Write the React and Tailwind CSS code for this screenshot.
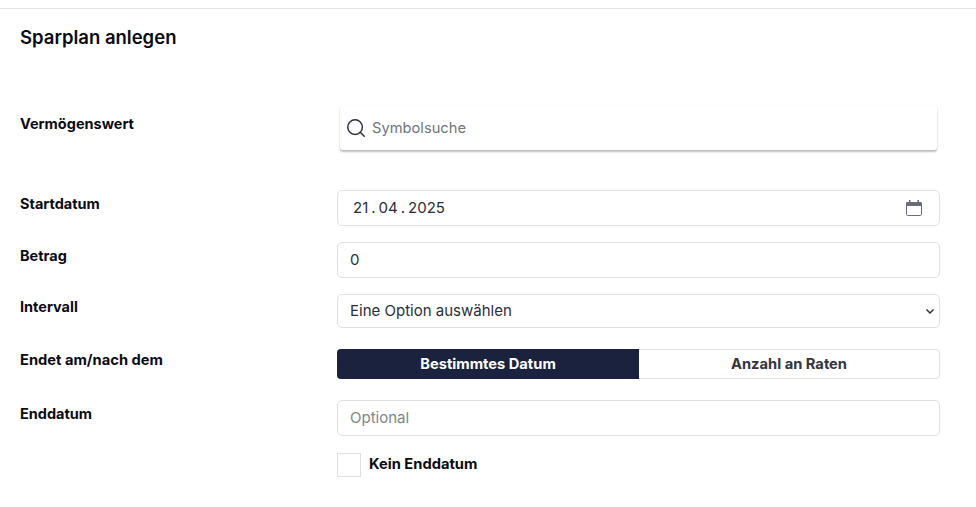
import React from 'react';
import { Search } from 'lucide-react';

const labelClass = 'text-[14.500px] leading-[20px] font-bold text-[#0b0b14]';
const fieldClass = 'w-full rounded-[5px] border border-[#e1e1e1] bg-white px-3 text-[15px] text-[#2b2d3a] outline-none';

function CalendarIcon() {
  return (
    <svg width="16" height="16" viewBox="0 0 16 16" fill="none">
      <path d="M3 0h1.500v2h7V0H13v2h1.500c.8 0 1.500.7 1.500 1.500V6H0V3.500C0 2.700.7 2 1.500 2H3z" fill="#6b6c7a" />
      <rect x="0.500" y="2.500" width="15" height="13" rx="1.200" stroke="#6b6c7a" />
    </svg>
  );
}

export default function App() {
  return (
    <div className="min-h-[507px] bg-white font-['Inter',sans-serif]">
      <div className="pt-2">
        <div className="border-t border-[#e3e3e3]" />
      </div>

      <h1 className="ml-5 mt-4 text-[18.500px] leading-[24px] font-semibold text-[#0b0b14]">Sparplan anlegen</h1>

      <div className="mt-[57px] grid grid-cols-[337px_603px] items-start">
        <div className={`pl-5 pt-2 ${labelClass}`}>Vermögenswert</div>
        <div className="px-[3px] h-[44px]">
          <div className="flex h-[44px] items-center gap-[5px] rounded-[3px] bg-white pl-[5px] shadow-[0_2px_2px_rgba(0,0,0,0.25),0_0_2px_rgba(0,0,0,0.06)]">
            <Search size={22} strokeWidth={1.600} className="text-[#2b2d3a]" />
            <input placeholder="Symbolsuche" className="flex-1 bg-transparent text-[14.700px] text-[#2b2d3a] outline-none placeholder:text-[#71757d]" />
          </div>
        </div>

        <div className={`mt-[40px] pl-5 pt-1 ${labelClass}`}>Startdatum</div>
        <div className="mt-[40px]">
          <div className={`${fieldClass} flex h-[36px] items-center justify-between pl-[15px] pr-[17px]`}>
            <span className="flex gap-[3px]">
              <span>21</span>
              <span>.</span>
              <span>04</span>
              <span>.</span>
              <span>2025</span>
            </span>
            <CalendarIcon />
          </div>
        </div>

        <div className={`mt-4 pl-5 pt-1 ${labelClass}`}>Betrag</div>
        <div className="mt-4">
          <input defaultValue="0" className={`${fieldClass} block h-[36px] pb-[2px]`} />
        </div>

        <div className={`mt-4 pl-5 pt-[3px] ${labelClass}`}>Intervall</div>
        <div className="relative mt-4">
          <select className={`${fieldClass} block h-[34px] appearance-none`} defaultValue="">
            <option value="">Eine Option auswählen</option>
          </select>
          <svg className="absolute right-[6px] top-[15px]" width="8" height="5" viewBox="0 0 8 5" fill="none">
            <path d="M.5.500 4 4 7.500.500" stroke="#2b2d3a" strokeWidth="1.400" />
          </svg>
        </div>

        <div className={`mt-[21px] pl-5 pt-[1px] ${labelClass} text-[14.700px]`}>Endet am/nach dem</div>
        <div className="mt-[21px] flex h-[30px] rounded-[4px] border border-[#e1e1e1] text-[14.700px] font-bold">
          <div className="-my-px -ml-px flex w-[302px] items-center justify-center rounded-l-[4px] bg-[#1a223d] text-white">Bestimmtes Datum</div>
          <div className="flex flex-1 items-center justify-center text-[#33343f]">Anzahl an Raten</div>
        </div>

        <div className={`mt-[21px] pl-5 pt-1 ${labelClass}`}>Enddatum</div>
        <div className="mt-[21px]">
          <input placeholder="Optional" className={`${fieldClass} block h-[36px] pb-[2px] placeholder:text-[#7e858c]`} />
        </div>

        <div className="mt-[17px]" />
        <label className="mt-[17px] flex items-center gap-2">
          <span className="h-[24px] w-[24px] border border-[#dfdfdf] bg-white" />
          <span className="pb-[2px] text-[14.700px] font-bold text-[#0b0b14]">Kein Enddatum</span>
        </label>
      </div>
    </div>
  );
}
